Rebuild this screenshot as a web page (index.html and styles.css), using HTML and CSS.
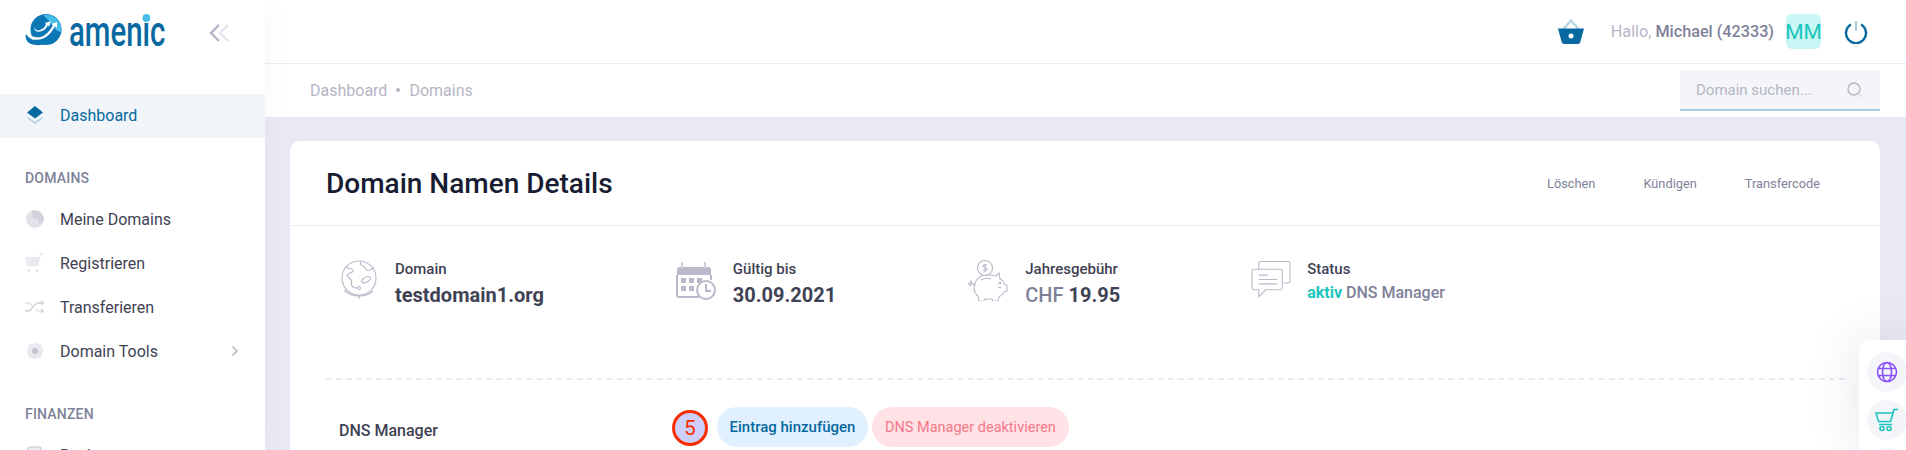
FILE: index.html
```html
<!DOCTYPE html>
<html lang="de">
<head>
<meta charset="utf-8">
<title>Domain Namen Details</title>
<link rel="stylesheet" href="styles.css">
</head>
<body>
<div class="app">
  <aside class="sidebar">
    <div class="brand">
      <svg class="logo-mark" width="38" height="34" viewBox="0 0 38 34">
        <circle cx="21" cy="15.500" r="15.500" fill="#0b77b5"/>
        <path d="M18 1a15 15 0 0 1 18.500 15c0 3-4 2-6-1-3-5-8-10-12.500-14z" fill="#46bde8"/>
        <path d="M1 20c-2 7 4 12 14 11 8-1 15-5 19-10-5 3-12 6-18 6-6 0-12-2-15-7z" fill="#0b77b5"/>
        <path d="M3 19c1 6 8 8 14 6 6-2 10-7 13-13l2 2 0-6-6 2 2 1c-3 6-7 10-12 12-5 1-10 0-13-4z" fill="#fff"/>
        <path d="M9 13c0 4 4 6 8 4 3-1 5-4 6-6l1 2 2-6-6 2 1 1c-1 3-3 5-6 6-2 1-5 0-6-3z" fill="#fff"/>
      </svg>
      <div class="logo-box"><span class="logo-text">amen<span class="logo-i">i</span>c</span></div>
      <svg class="collapse" width="22" height="22" viewBox="0 0 22 22">
        <path d="M11 3 3 11l8 8" fill="none" stroke="#b5b5c8" stroke-width="2.400"/>
        <path d="M20 3l-8 8 8 8" fill="none" stroke="#e4e4ef" stroke-width="2.400"/>
      </svg>
    </div>
    <nav class="nav">
      <a class="nav-item active">
        <svg class="nav-icon" width="20" height="20" viewBox="0 0 20 20">
          <path d="M10 1 18 7.500 10 13.500 2 7.500z" fill="#0769a0"/>
          <path d="M2.500 12.500 10 18l7.500-5.500" fill="none" stroke="#a9cde2" stroke-width="1.500"/>
        </svg>
        <span>Dashboard</span>
      </a>
      <h3 class="nav-head">DOMAINS</h3>
      <a class="nav-item">
        <svg class="nav-icon" width="20" height="20" viewBox="0 0 20 20">
          <circle cx="10" cy="10" r="9" fill="#e2e2e9"/>
          <path d="M7 1.500 13 2c4 2 6 6 5.500 10L14 15l-1-5-5-1-1-3z" fill="#d2d2dc"/>
        </svg>
        <span>Meine Domains</span>
      </a>
      <a class="nav-item">
        <svg class="nav-icon" width="20" height="20" viewBox="0 0 20 20">
          <path d="M0 4h15l-1.500 9H2z" fill="#e9e9f0"/>
          <path d="M15 4l.500-3H19" fill="none" stroke="#e2e2ea" stroke-width="1.200"/>
          <circle cx="4" cy="17.500" r="1" fill="#c6c6d2"/>
          <circle cx="12" cy="17.500" r="1" fill="#c6c6d2"/>
        </svg>
        <span>Registrieren</span>
      </a>
      <a class="nav-item">
        <svg class="nav-icon" width="20" height="20" viewBox="0 0 20 20">
          <path d="M0 14h3c4 0 6-8 10-8h5" fill="none" stroke="#cfcfda" stroke-width="1.300"/>
          <path d="M0 6h3c2 0 3 2 4 3m3 3c1 1 2 2 3 2h5" fill="none" stroke="#e2e2ea" stroke-width="1.300"/>
          <path d="M16 3l3.500 3-3.500 3zM16 11l3.500 3-3.500 3z" fill="#d6d6e0"/>
        </svg>
        <span>Transferieren</span>
      </a>
      <a class="nav-item">
        <svg class="nav-icon" width="20" height="20" viewBox="0 0 20 20">
          <path d="M10 2l2.500 1.500h3l1 3L18 10l-1.500 3.500-1 3h-3L10 18l-2.500-1.500h-3l-1-3L2 10l1.500-3.500 1-3h3z" fill="#e9e9f0" stroke="#e9e9f0" stroke-linejoin="round"/>
          <circle cx="10" cy="10" r="3" fill="#c4c4d0"/>
        </svg>
        <span>Domain Tools</span>
        <svg class="nav-arrow" width="8" height="12" viewBox="0 0 8 12"><path d="M1.500 1.500 6 6l-4.500 4.500" fill="none" stroke="#a6a6b8" stroke-width="1.100"/></svg>
      </a>
      <h3 class="nav-head nav-head-wide">FINANZEN</h3>
      <a class="nav-item">
        <svg class="nav-icon" width="20" height="20" viewBox="0 0 20 20">
          <rect x="3" y="2" width="13" height="16" rx="1.500" fill="#eeeef3" stroke="#c8c8d4" stroke-width="1.200"/>
        </svg>
        <span>Rechnungen</span>
      </a>
    </nav>
  </aside>
  <div class="main">
    <header class="topbar">
      <svg class="basket" width="28" height="26" viewBox="0 0 28 26">
        <path d="M6.500 10 14 1.500 21.500 10" fill="none" stroke="#b8d5e6" stroke-width="2.500"/>
        <path d="M1 9.500h26l-3.500 13a3 3 0 0 1-3 2.500h-13a3 3 0 0 1-3-2.500z" fill="#0769a0"/>
        <circle cx="14" cy="17" r="2.500" fill="#fff"/>
      </svg>
      <span class="hello">Hallo, <b>Michael (42333)</b></span>
      <span class="avatar">MM</span>
      <svg class="power" width="24" height="24" viewBox="0 0 24 24">
        <path d="M7 4.500a10 10 0 1 0 10 0" fill="none" stroke="#0769a0" stroke-width="2.400"/>
        <path d="M12 1v10" stroke="#a9cde2" stroke-width="2.200"/>
      </svg>
    </header>
    <div class="subbar">
      <div class="crumbs"><span>Dashboard</span><i class="dot"></i><span>Domains</span></div>
      <div class="search">
        <span>Domain suchen...</span>
        <svg width="18" height="18" viewBox="0 0 18 18">
          <circle cx="8" cy="8" r="6" fill="none" stroke="#b5b5c3" stroke-width="1.400"/>
          <path d="M12.500 12.500 16 16" stroke="#dcdce6" stroke-width="1.600"/>
        </svg>
      </div>
    </div>
    <div class="content">
      <section class="card">
        <div class="card-head">
          <h1>Domain Namen Details</h1>
          <div class="actions"><a>Löschen</a><a>Kündigen</a><a>Transfercode</a></div>
        </div>
        <div class="stats">
          <div class="stat">
            <svg class="stat-icon" width="40" height="42" viewBox="0 0 40 42" fill="none" stroke="#b9b9c9" stroke-width="1.100">
              <circle cx="20" cy="19" r="17"/>
              <path d="M7 8c3 2 6 1 7 3s-3 3-5 4 1 4 3 6-1 4 1 6 5 3 5 1M22 2.500c-2 3 1 4 3 5s1 4 4 4 5-2 6-3M24 20c2-2 5-3 7-2s-1 4-3 5-4 1-5 0 0-2 1-3z"/>
              <circle cx="20" cy="29" r="1.500"/>
              <path d="M20 36v4M5 31c3 3 8 6 15 6s11-2 14-5"/>
            </svg>
            <div class="stat-text"><div class="stat-label">Domain</div><div class="stat-value">testdomain1.org</div></div>
          </div>
          <div class="stat">
            <svg class="stat-icon" width="42" height="42" viewBox="0 0 42 42">
              <path d="M2 11a3 3 0 0 1 3-3h28a3 3 0 0 1 3 3v5H2z" fill="#b9b9c9"/>
              <path d="M2 16v20a2 2 0 0 0 2 2h20" fill="none" stroke="#b9b9c9" stroke-width="2"/>
              <path d="M36 16v5" stroke="#b9b9c9" stroke-width="2"/>
              <path d="M7 3v7M30 3v7" stroke="#b9b9c9" stroke-width="2"/>
              <path d="M7 3v7M30 3v7" stroke="#fff" stroke-width=".6"/>
              <g fill="#b9b9c9"><rect x="6" y="19" width="5" height="5"/><rect x="14" y="19" width="5" height="5"/><rect x="22" y="19" width="5" height="5"/><rect x="6" y="27" width="5" height="5"/><rect x="14" y="27" width="5" height="5"/></g>
              <circle cx="31" cy="31" r="9" fill="#fff" stroke="#b9b9c9" stroke-width="2"/>
              <path d="M31 25v7h5" fill="none" stroke="#b9b9c9" stroke-width="2"/>
            </svg>
            <div class="stat-text"><div class="stat-label">Gültig bis</div><div class="stat-value">30.09.2021</div></div>
          </div>
          <div class="stat">
            <svg class="stat-icon" width="42" height="42" viewBox="0 0 42 42" fill="none" stroke="#b9b9c9" stroke-width="1.100">
              <circle cx="18" cy="9" r="7.500"/>
              <path d="M18 5v8M20 6.500c-1-1-4-1-4 .8s4 1.200 4 3-3 1.800-4.300.6"/>
              <path d="M8 26c0-5 5-10 12-10 3 0 6 0 9 1l3-3 1 6c3 1 4 4 5 6h2v6l-3 1c-1 2-3 4-5 5l-1 4h-5l-1-2h-7l-1 2h-5l-1-5c-3-2-4-6-4-10z"/>
              <path d="M8 25c-3 0-5-2-6-1s1 3 2 2 0-4 0-5M14 21c3-2 7-2 10-1M34 28c-1 1-2 1-3 0"/>
              <circle cx="33" cy="24" r=".7" fill="#b9b9c9"/>
            </svg>
            <div class="stat-text"><div class="stat-label">Jahresgebühr</div><div class="stat-value"><span class="muted">CHF</span> 19.95</div></div>
          </div>
          <div class="stat">
            <svg class="stat-icon" width="40" height="42" viewBox="0 0 41 42" fill="none" stroke="#b9b9c9" stroke-width="1.100">
              <path d="M8 10V4a2 2 0 0 1 2-2h28a2 2 0 0 1 2 2v18a2 2 0 0 1-2 2h-5"/>
              <path d="M3 10h27a2 2 0 0 1 2 2v17a2 2 0 0 1-2 2H15l-7 7v-7H3a2 2 0 0 1-2-2V12a2 2 0 0 1 2-2z" fill="#fff"/>
              <path d="M8 16h9M8 20.500h19M8 25h19"/>
            </svg>
            <div class="stat-text"><div class="stat-label">Status</div><div class="stat-status"><b>aktiv</b> DNS Manager</div></div>
          </div>
        </div>
        <div class="rule"></div>
        <div class="dns-row">
          <span class="dns-title">DNS Manager</span>
          <span class="step">5</span>
          <button class="btn btn-blue">Eintrag hinzufügen</button>
          <button class="btn btn-red">DNS Manager deaktivieren</button>
        </div>
      </section>
    </div>
  </div>
</div>
<div class="dock">
  <span class="dock-btn">
    <svg width="24" height="24" viewBox="0 0 24 24" fill="none" stroke="#8950fc" stroke-width="1.600">
      <circle cx="12" cy="12" r="9.500"/>
      <ellipse cx="12" cy="12" rx="4.500" ry="9.500"/>
      <path d="M3 8.500h18M3 15.500h18"/>
    </svg>
  </span>
  <span class="dock-btn">
    <svg width="24" height="24" viewBox="0 0 24 24" fill="none" stroke="#1bc5bd" stroke-width="1.600">
      <path d="M1 5h17l-2.500 8.500h-12zM18 5l1-3.500h4M4 16.500h13"/>
      <circle cx="7" cy="20.500" r="2"/>
      <circle cx="14" cy="20.500" r="2"/>
    </svg>
  </span>
  <span class="dock-btn"></span>
</div>
</body>
</html>
```

FILE: styles.css
```css
* { box-sizing: border-box; }
html, body { margin: 0; height: 450px; overflow: hidden; }
body { font-family: Roboto, "Liberation Sans", sans-serif; background: #e9e9f4; color: #3f4254; position: relative; }
.app { display: flex; height: 450px; overflow: hidden; }
.sidebar { width: 265px; flex: none; height: 450px; overflow: hidden; background: #fff; box-shadow: 0 0 28px rgba(82, 63, 105, .04); position: relative; z-index: 2; }
.brand { height: 94px; padding: 13px 0 0 25px; display: flex; align-items: flex-start; }
.logo-mark { flex: none; margin-top: 1px; }
.logo-box { width: 100px; flex: none; margin: 1px 0 0 6px; height: 40px; }
.logo-text { display: inline-block; font-family: Roboto, sans-serif; font-weight: 500; font-size: 42px; line-height: 36px; color: #0769a0; transform: scaleX(.7); transform-origin: left center; }
.logo-i { position: relative; }
.logo-i::before { content: ""; position: absolute; left: 50%; top: 7px; width: 11px; height: 8px; margin-left: -5.500px; border-radius: 50%; background: #45bde8; }
.collapse { margin: 9px 0 0 39px; flex: none; }
.nav-item { display: flex; align-items: center; height: 44px; padding: 0 25px 2px; font-size: 16px; color: #3f4254; }
.nav-item.active { background: #f1f4f8; color: #0769a0; }
.nav-icon { flex: none; margin-right: 15px; }
.nav-arrow { margin-left: auto; margin-right: 1px; }
.nav-head { margin: 0; padding: 0 25px; height: 40px; line-height: 40px; font-size: 14px; font-weight: 500; color: #7e8299; letter-spacing: .2px; }
.nav-item + .nav-head { margin-top: 20px; }
.nav-item.active + .nav-head { margin-top: 20px; height: 40px; }
.nav-head-wide { margin-top: 20px !important; }
.main { flex: 1; min-width: 0; display: flex; flex-direction: column; }
.topbar { height: 64px; flex: none; background: #fff; border-bottom: 1px solid #ebebf3; display: flex; align-items: center; padding: 0 38px 0 0; justify-content: flex-end; }
.basket { margin-right: 26px; }
.hello { font-size: 16.200px; font-weight: 400; color: #b5b5c3; margin-right: 12px; }
.hello b { font-weight: 500; color: #7e8299; }
.avatar { width: 35px; height: 35px; border-radius: 6px; background: #c9f7f5; color: #1bc5bd; font-size: 21px; display: flex; align-items: center; justify-content: center; margin-right: 23px; }
.subbar { height: 53px; flex: none; background: #fff; display: flex; align-items: center; justify-content: space-between; padding: 0 26px 0 45px; }
.crumbs { display: flex; align-items: center; font-size: 16px; color: #b5b5c3; padding-bottom: 1px; }
.dot { width: 4px; height: 4px; border-radius: 50%; background: #b5b5c3; margin: 0 9px; }
.search { width: 200px; height: 41px; background: #f3f5f9; border-bottom: 2px solid #a5cbe3; display: flex; align-items: center; justify-content: space-between; padding: 0 16px; font-size: 15px; color: #b5b5c3; }
.content { flex: 1; padding: 24px 26px 0 25px; min-height: 0; }
.card { background: #fff; border-radius: 10px 10px 0 0; height: 100%; padding: 0; overflow: hidden; }
.card-head { height: 85px; border-bottom: 1px solid #ebebf3; display: flex; align-items: center; justify-content: space-between; padding: 0 60px 0 36px; }
.card-head h1 { margin: 0; font-size: 28px; font-weight: 500; color: #181c32; }
.actions { display: flex; gap: 48px; font-size: 12.800px; color: #7e8299; }
.stats { display: flex; gap: 131px; padding: 31px 0 0 49px; height: 152px; }
.stat { display: flex; gap: 16px; }
.stat-icon { flex: none; margin-top: 2px; }
.stat-label { font-size: 15px; font-weight: 500; color: #3f4254; line-height: 20px; margin-top: 2px; }
.stat-value { font-size: 20px; font-weight: 700; color: #3f4254; line-height: 28px; margin-top: 2px; }
.muted { font-weight: 500; color: #7e8299; }
.stat-status { font-size: 16px; font-weight: 500; color: #7e8299; line-height: 22px; margin-top: 3px; }
.stat-status b { font-weight: 700; color: #1bc5bd; }
.rule { margin: 0 35px 0 36px; border-top: 2px dashed #ebebf3; }
.dns-row { display: flex; align-items: flex-start; padding: 27px 0 0 49px; }
.dns-title { width: 333px; font-size: 16px; font-weight: 500; color: #3f4254; line-height: 20px; padding-top: 14px; }
.step { width: 36px; height: 36px; margin: 3px 9px 0 0; border-radius: 50%; border: 3px solid #f52e00; background: #cfcffb; color: #f52e00; font-size: 21px; display: flex; align-items: center; justify-content: center; }
.btn { height: 40px; border: 0; border-radius: 20px; padding: 0 13px; font-family: inherit; margin-right: 4px; }
.btn-blue { background: #e1f0ff; color: #0769a0; font-weight: 500; font-size: 15px; padding: 0 12.500px; }
.btn-red { background: #ffe2e5; color: #f6788a; font-weight: 400; font-size: 14.500px; }
.dock { position: absolute; left: 1859px; top: 340px; width: 47px; height: 110px; background: #fff; border-radius: 10px 0 0 0; padding: 12px 0 0 8px; box-shadow: 0 0 50px rgba(82, 63, 105, .15); z-index: 3; display: flex; flex-direction: column; gap: 8px; overflow: hidden; }
.dock-btn { width: 40px; height: 40px; flex: none; border-radius: 50%; background: #f3f5f9; display: flex; align-items: center; justify-content: center; }
```
